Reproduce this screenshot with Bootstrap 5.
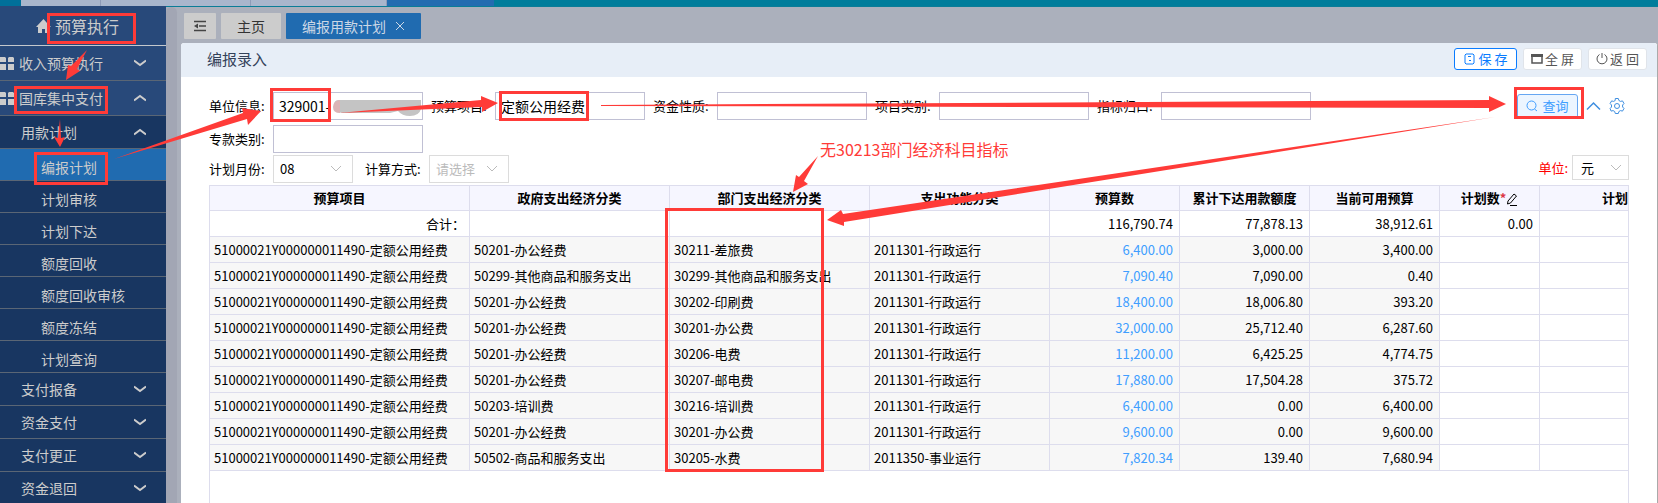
<!DOCTYPE html>
<html lang="zh-CN">
<head>
<meta charset="utf-8">
<meta name="viewport" content="width=device-width, initial-scale=1">
<title>编报用款计划</title>
<link href="https://cdn.jsdelivr.net/npm/bootstrap@5.3.0/dist/css/bootstrap.min.css" rel="stylesheet">
<style>
  body { font: 13px/20px "Noto Sans CJK SC", sans-serif; color: #000; background: #abb0bc; }
  .app-strip { height: 6px; background: #007d9b; }
  .strip-start { width: 21px; background: #00709a; }
  .strip-tab { background: #a9b6cc; border-right: 1px solid #8f9cb8; }
  .strip-active { background: #236cb0; }
  .side { width: 166px; background: #183661; font-size: 14px; }
  .side a { color: #ccc; text-decoration: none; border-bottom: 1px solid #5a6675; height: 33px; padding-left: 21px; }
  .side a.side-head { height: 40px; font-size: 16px; background: #28497a; border-color: #c4c8cd; padding-left: 36px; gap: 4px; }
  .side a.side-main { height: 35px; background: #28497a; padding-left: 0; gap: 5px; }
  .side a.side-leaf { height: 32px; padding: 4px 0 0 41px; }
  .side a.active { background: #206bb0; }
  .side .chev { margin: 0 20px 0 auto; }
  .work { border-top: 1px solid #0a7d97; }
  .rail { width: 11px; background: #a2a6b4; border-radius: 6px 6px 0 0; }
  .tab-row { padding: 6px 0 4px 3px; gap: 5px; }
  .tab-row button { height: 26px; border: 0; background: #ccc; color: #333; font-size: 14px; border-radius: 1px; padding: 0 16px; }
  .tab-row .tab-icon { padding: 0 10px; }
  .tab-row .tab-on { background: #206bb0; color: #ccd8e6; gap: 10px; padding: 0 17px 0 16px; }
  .panel { background: #fff; border-right: 1px solid #aaa; border-radius: 3px 3px 0 0; margin-left: 4px; }
  .panel-head { height: 34px; background: #e7eef7; padding: 0 10px 2px 26px; border-radius: 3px 3px 0 0; gap: 6px; }
  .panel-head h1 { font-size: 15px; line-height: 22px; color: #33425a; }
  .tool { width: 59px; height: 22px; border: 1px solid #e0e4ea; border-radius: 3px; background: #fff; color: #555; font-size: 13px; line-height: 20px; padding: 0; gap: 2px; white-space: nowrap; }
  .tool-save { width: 63px; border-color: #0a7cff; color: #0a7cff; gap: 4px; }
  .panel-body { padding: 15px 28px 0; }
  .filters { gap: 5px 8px; }
  .filter-line { padding-top: 2px; }
  .field label { width: 64px; }
  .field input { width: 150px; height: 28px; border: 1px solid #c0c0d4; padding: 0 5px; font-size: 14px; color: #000; }
  .field select { width: 80px; height: 28px; font-size: 13px; border: 1px solid #dcdcdc; border-radius: 0; padding: 0 20px 0 6px; color: #000;
    background: #fff url("data:image/svg+xml,%3Csvg xmlns='http://www.w3.org/2000/svg' width='12' height='8'%3E%3Cpath d='M1 1l5 5 5-5' fill='none' stroke='%23bbb'/%3E%3C/svg%3E") no-repeat right 10px center; appearance: none; }
  .field select:disabled { color: #bbb; opacity: 1; }
  .field .unit-select { width: 57px; height: 25px; padding-left: 8px; background-position: right 6px center; }
  .unit-label { color: red; }
  .actions { gap: 8px; height: 28px; }
  .query { height: 25px; width: 61px; border: 1px solid #66a6f2; border-radius: 3px; background: #ecf5ff; color: #409eff; gap: 4px; padding: 0; }
  .grid-wrap { border: 1px solid #dddded; border-bottom: 0; margin-top: 2px; }
  .plan-table { table-layout: fixed; border-collapse: separate; border-spacing: 0; width: 100%; }
  .plan-table th, .plan-table td { height: 26px; line-height: 20px; padding: 0 4px; border-right: 1px solid #dddded; border-bottom: 1px solid #dddded; white-space: nowrap; overflow: hidden; }
  .plan-table th { height: 25px; background: #f6f6ff; text-align: center; }
  .plan-table tr > :last-child { border-right: 0; }
  .plan-table th:last-child { text-align: right; padding: 0; }
  .plan-table tbody tr:not(:first-child) td:nth-child(-n+7) { background: #f7f7f7; }
  .plan-table td:nth-child(n+5) { text-align: right; padding-right: 6px; }
  .plan-table a { color: #409eff; text-decoration: none; }
  .marks { position: absolute; left: 0; top: 0; pointer-events: none; }
  .marks text { font-size: 16px; }
</style>
</head>
<body>
<svg class="d-none">
  <symbol id="down" viewBox="0 0 12 8"><path d="M0 1.5l6 4.5 6-4.5" fill="none" stroke="#ccc" stroke-width="2"/></symbol>
  <symbol id="up" viewBox="0 0 12 8"><path d="M0 6.5l6-4.5 6 4.5" fill="none" stroke="#ccc" stroke-width="2"/></symbol>
  <symbol id="tiles" viewBox="0 0 14 14"><path d="M0 1h5l1 1v4H0zM8 2l1-1h4l1 1v4H8zM0 8h6v6H0zM8 8h6v6H8z" fill="#ccc"/></symbol>
</svg>
<div class="vh-100 overflow-hidden d-flex flex-column position-relative">
  <div class="app-strip d-flex flex-shrink-0">
    <div class="strip-start"></div>
    <div class="strip-tab" style="width:80px"></div>
    <div class="strip-tab" style="width:150px"></div>
    <div class="strip-tab" style="width:136px"></div>
    <div class="strip-active" style="width:107px"></div>
  </div>
  <div class="d-flex flex-grow-1 overflow-hidden">
    <nav class="side flex-shrink-0 overflow-hidden">
      <a class="side-head d-flex align-items-center" href="#"><svg width="15" height="16" viewBox="0 0 15 16"><path d="M7.500 1L0 9h2v6h4v-4h3v4h4V9h2l-2-2V3h-2v2z" fill="#ccc"/></svg>预算执行</a>
      <a class="side-main d-flex align-items-center" href="#"><svg width="14" height="14"><use href="#tiles"/></svg>收入预算执行<svg class="chev" width="12" height="8"><use href="#down"/></svg></a>
      <a class="side-main d-flex align-items-center" href="#"><svg width="14" height="14"><use href="#tiles"/></svg>国库集中支付<svg class="chev" width="12" height="8"><use href="#up"/></svg></a>
      <a class="d-flex align-items-center" href="#">用款计划<svg class="chev" width="12" height="8"><use href="#up"/></svg></a>
      <a class="side-leaf active d-flex align-items-center" href="#">编报计划</a>
      <a class="side-leaf d-flex align-items-center" href="#">计划审核</a>
      <a class="side-leaf d-flex align-items-center" href="#">计划下达</a>
      <a class="side-leaf d-flex align-items-center" href="#">额度回收</a>
      <a class="side-leaf d-flex align-items-center" href="#">额度回收审核</a>
      <a class="side-leaf d-flex align-items-center" href="#">额度冻结</a>
      <a class="side-leaf d-flex align-items-center" href="#">计划查询</a>
      <a class="d-flex align-items-center" href="#">支付报备<svg class="chev" width="12" height="8"><use href="#down"/></svg></a>
      <a class="d-flex align-items-center" href="#">资金支付<svg class="chev" width="12" height="8"><use href="#down"/></svg></a>
      <a class="d-flex align-items-center" href="#">支付更正<svg class="chev" width="12" height="8"><use href="#down"/></svg></a>
      <a class="d-flex align-items-center" href="#">资金退回<svg class="chev" width="12" height="8"><use href="#down"/></svg></a>
    </nav>
    <main class="work d-flex flex-grow-1 overflow-hidden">
      <div class="rail flex-shrink-0"></div>
      <div class="d-flex flex-column flex-grow-1 overflow-hidden">
        <div class="tab-row d-flex ms-1">
          <button class="tab-icon" type="button" aria-label="收起菜单"><svg class="d-block" width="12" height="12" viewBox="0 0 12 12"><path d="M0 1.500h12M5 6h7M0 10.500h12" stroke="#444" stroke-width="1.500"/><path d="M0 6l4-2.500v5z" fill="#444"/></svg></button>
          <button type="button">主页</button>
          <button class="tab-on d-flex align-items-center" type="button">编报用款计划<svg width="8" height="8" viewBox="0 0 8 8"><path d="M0 0l8 8M8 0L0 8" stroke="#ccd8e6"/></svg></button>
        </div>
        <section class="panel flex-grow-1 overflow-hidden">
          <header class="panel-head d-flex align-items-center">
            <h1 class="m-0 me-auto fw-normal">编报录入</h1>
            <button class="tool tool-save d-flex align-items-center justify-content-center" type="button"><svg width="11" height="12" viewBox="0 0 11 12"><path d="M1 2l1-1h7l1 1v8l-1 1H2l-1-1zM4 3.500h3M5 7.500h2" fill="none" stroke="#0a7cff"/></svg>保&nbsp;存</button>
            <button class="tool d-flex align-items-center justify-content-center" type="button"><svg width="12" height="10" viewBox="0 0 12 10"><path d="M1 2h10v7H1z" fill="none" stroke="#555" stroke-width="1.500"/><path d="M0 0h12v3H0z" fill="#555"/></svg>全&nbsp;屏</button>
            <button class="tool d-flex align-items-center justify-content-center" type="button"><svg width="12" height="12" viewBox="0 0 12 12"><path d="M3.500 1.500a5 5 0 1 0 5 0M6 0v5" fill="none" stroke="#555"/></svg>返&nbsp;回</button>
          </header>
          <div class="panel-body">
            <div class="d-flex align-items-start">
              <form class="filters d-flex flex-wrap flex-grow-1">
                <div class="field d-flex align-items-center"><label for="f1">单位信息:</label><input id="f1" value="329001-"></div>
                <div class="field d-flex align-items-center"><label for="f2">预算项目:</label><input id="f2" value="定额公用经费"></div>
                <div class="field d-flex align-items-center"><label for="f3">资金性质:</label><input id="f3"></div>
                <div class="field d-flex align-items-center"><label for="f4">项目类别:</label><input id="f4"></div>
                <div class="field d-flex align-items-center"><label for="f5">指标归口:</label><input id="f5"></div>
                <div class="field d-flex align-items-center"><label for="f6">专款类别:</label><input id="f6"></div>
              </form>
              <div class="actions d-flex align-items-center flex-shrink-0">
                <button class="query d-flex align-items-center justify-content-center" type="button"><svg width="12" height="12" viewBox="0 0 12 12"><circle cx="5.500" cy="5.500" r="4.500" fill="none" stroke="#409eff"/><path d="M8.500 9l2.500 2" stroke="#409eff"/></svg>查询</button>
                <svg width="15" height="10" viewBox="0 0 15 10"><path d="M1 8.500L7.500 2 14 8.500" fill="none" stroke="#3f8fe0" stroke-width="1.500"/></svg>
                <svg class="me-1" width="16" height="16" viewBox="0 0 16 16" fill="none" stroke="#3f8fe0"><path d="M6.500 .5h3l.6 2 1.600 .9 2-.5 1.500 2.600-1.400 1.500v2l1.400 1.500-1.500 2.600-2-.5-1.600 .9-.6 2h-3l-.6-2-1.600-.9-2 .5L1.300 10.500 2.700 9V7L1.300 5.500l1.500-2.600 2 .5 1.600-.9z" transform="translate(-.2)"/><circle cx="8" cy="8" r="2.500"/></svg>
              </div>
            </div>
            <div class="filters filter-line d-flex align-items-start">
              <div class="field d-flex align-items-center"><label for="s1">计划月份:</label><select id="s1"><option>08</option></select></div>
              <div class="field d-flex align-items-center ms-1"><label for="s2">计算方式:</label><select id="s2" disabled><option>请选择</option></select></div>
              <div class="field d-flex align-items-center ms-auto gap-1"><label class="unit-label w-auto" for="s3">单位:</label><select class="unit-select" id="s3"><option>元</option></select></div>
            </div>
            <div class="grid-wrap vh-100">
              <table class="plan-table">
                <colgroup><col style="width:260px"><col style="width:200px"><col style="width:200px"><col style="width:180px"><col style="width:130px"><col style="width:130px"><col style="width:130px"><col style="width:100px"><col></colgroup>
                <thead><tr><th>预算项目</th><th>政府支出经济分类</th><th>部门支出经济分类</th><th>支出功能分类</th><th>预算数</th><th>累计下达用款额度</th><th>当前可用预算</th><th>计划数<span class="text-danger">*</span><svg width="12" height="13" viewBox="0 0 12 13"><path d="M2 8l6-7 2.500 2-6 7-3 1zM4 12.500h7" fill="none" stroke="#000"/></svg></th><th>计划</th></tr></thead>
                <tbody>
                  <tr><td class="text-end">合计：</td><td></td><td></td><td></td><td>116,790.74</td><td>77,878.13</td><td>38,912.61</td><td>0.00</td><td></td></tr>
                  <tr><td>51000021Y000000011490-定额公用经费</td><td>50201-办公经费</td><td>30211-差旅费</td><td>2011301-行政运行</td><td><a href="#">6,400.00</a></td><td>3,000.00</td><td>3,400.00</td><td></td><td></td></tr>
                  <tr><td>51000021Y000000011490-定额公用经费</td><td>50299-其他商品和服务支出</td><td>30299-其他商品和服务支出</td><td>2011301-行政运行</td><td><a href="#">7,090.40</a></td><td>7,090.00</td><td>0.40</td><td></td><td></td></tr>
                  <tr><td>51000021Y000000011490-定额公用经费</td><td>50201-办公经费</td><td>30202-印刷费</td><td>2011301-行政运行</td><td><a href="#">18,400.00</a></td><td>18,006.80</td><td>393.20</td><td></td><td></td></tr>
                  <tr><td>51000021Y000000011490-定额公用经费</td><td>50201-办公经费</td><td>30201-办公费</td><td>2011301-行政运行</td><td><a href="#">32,000.00</a></td><td>25,712.40</td><td>6,287.60</td><td></td><td></td></tr>
                  <tr><td>51000021Y000000011490-定额公用经费</td><td>50201-办公经费</td><td>30206-电费</td><td>2011301-行政运行</td><td><a href="#">11,200.00</a></td><td>6,425.25</td><td>4,774.75</td><td></td><td></td></tr>
                  <tr><td>51000021Y000000011490-定额公用经费</td><td>50201-办公经费</td><td>30207-邮电费</td><td>2011301-行政运行</td><td><a href="#">17,880.00</a></td><td>17,504.28</td><td>375.72</td><td></td><td></td></tr>
                  <tr><td>51000021Y000000011490-定额公用经费</td><td>50203-培训费</td><td>30216-培训费</td><td>2011301-行政运行</td><td><a href="#">6,400.00</a></td><td>0.00</td><td>6,400.00</td><td></td><td></td></tr>
                  <tr><td>51000021Y000000011490-定额公用经费</td><td>50201-办公经费</td><td>30201-办公费</td><td>2011301-行政运行</td><td><a href="#">9,600.00</a></td><td>0.00</td><td>9,600.00</td><td></td><td></td></tr>
                  <tr><td>51000021Y000000011490-定额公用经费</td><td>50502-商品和服务支出</td><td>30205-水费</td><td>2011350-事业运行</td><td><a href="#">7,820.34</a></td><td>139.40</td><td>7,680.94</td><td></td><td></td></tr>
                </tbody>
              </table>
            </div>
          </div>
        </section>
      </div>
    </main>
  </div>
  <!-- Hand-drawn guide marks laid over the screen -->
  <svg class="marks" width="1658" height="503" viewBox="0 0 1658 503">
    <path d="M338 100h83v9q-2 7-11 7-8 0-12-5l-8 2h-47q-9 0-9-7 0-6 4-6z" fill="#c4c4c4"/>
    <path d="M340 100q-7 1-7 7 0 6 7 6z" fill="#dcb4b6"/>
    <g fill="none" stroke="#ff3b38" stroke-width="3">
      <path d="M48.500 14.500h86v28h-86zM15.500 87.500h91v25h-91zM35.500 153.500h71v30h-71zM271.500 89.500h58v31h-58zM500.500 92.500h87v27h-87zM1515.500 88.500h67v29h-67zM666.500 209.500h156v261h-156z"/>
    </g>
    <g fill="#ff3b38">
      <path d="M87 50L71 66l-3-1-2 15 14-9-3-2z"/>
      <path d="M60 119l-2 19-4-1 6 10 5-10-4 1z"/>
      <path d="M114 159L243 113l-1-5 19 3-13 14-1-6z"/>
      <path d="M339 113L481 100v-4l17 7-16 9v-5z"/>
      <path d="M601 105L1489 100v-4l17 8-17 8v-4L601 106z"/>
      <path d="M1495 117L843 214l-2-4-14 10 17 6v-4z"/>
      <path d="M818 156L799 177l-3-2-3 17 15-8-4-3z"/>
      <text x="820" y="156">无30213部门经济科目指标</text>
    </g>
  </svg>
</div>
<script src="https://cdn.jsdelivr.net/npm/bootstrap@5.3.0/dist/js/bootstrap.bundle.min.js"></script>
</body>
</html>
